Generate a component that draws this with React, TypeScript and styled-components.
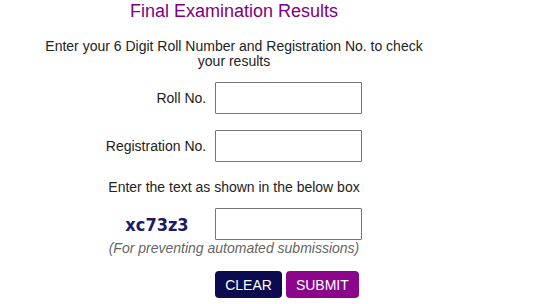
import React, { useState } from 'react';
import styled, { createGlobalStyle } from 'styled-components';

const GlobalStyle = createGlobalStyle`
  body {
    margin: 0;
    background: #fff;
    font-family: "Liberation Sans", Arial, sans-serif;
    color: #222;
  }
`;

const Page = styled.div`
  width: 468px;
  text-align: center;
`;

const Title = styled.h2`
  margin: 0;
  padding-top: 1px;
  font-size: 18px;
  font-weight: normal;
  line-height: 20px;
  color: #800080;
`;

const Intro = styled.p`
  margin: 18px 0 0;
  font-size: 14px;
  line-height: 15px;
`;

const Form = styled.form`
  display: grid;
  grid-template-columns: auto 147px;
  column-gap: 9px;
  row-gap: 16px;
  width: max-content;
  margin: 13px auto 0;
  align-items: center;
`;

const Label = styled.label`
  font-size: 14px;
  text-align: right;
`;

const Input = styled.input`
  width: 147px;
  height: 32px;
  box-sizing: border-box;
  border: 1px solid #767676;
  border-radius: 1px;
  padding: 0 6px;
  font-size: 14px;
  font-family: inherit;
`;

const Note = styled.div`
  grid-column: 1 / -1;
  font-size: 14px;
  line-height: 16px;
  text-align: center;
  margin: 1px 0 -3px;
`;

const Captcha = styled.div`
  text-align: center;
  font-family: "DejaVu Sans", sans-serif;
  font-stretch: condensed;
  font-weight: bold;
  font-size: 18px;
  color: #1a1a66;
  padding-left: 2px;
`;

const Hint = styled.div`
  grid-column: 1 / -1;
  font-size: 14px;
  font-style: italic;
  color: #666;
  line-height: 16px;
  margin-top: -16px;
`;

const Buttons = styled.div`
  grid-column: 2;
  display: flex;
  gap: 4px;
  margin-top: -1px;
`;

const Button = styled.button<{ $tone: 'dark' | 'purple' }>`
  height: 27px;
  padding: 0 10px;
  border: none;
  border-radius: 4px;
  color: #fff;
  font-family: "Liberation Sans", Arial, sans-serif;
  font-size: 14px;
  background: ${(p) => (p.$tone === 'dark' ? '#0d0b4f' : '#8b058b')};
  cursor: pointer;
`;

export default function App() {
  const [roll, setRoll] = useState('');
  const [reg, setReg] = useState('');
  const [code, setCode] = useState('');

  const clear = () => {
    setRoll('');
    setReg('');
    setCode('');
  };

  return (
    <Page>
      <GlobalStyle />
      <Title>Final Examination Results</Title>
      <Intro>
        Enter your 6 Digit Roll Number and Registration No. to check
        <br />
        your results
      </Intro>
      <Form onSubmit={(e) => e.preventDefault()}>
        <Label htmlFor="roll">Roll No.</Label>
        <Input id="roll" value={roll} onChange={(e) => setRoll(e.target.value)} />
        <Label htmlFor="reg">Registration No.</Label>
        <Input id="reg" value={reg} onChange={(e) => setReg(e.target.value)} />
        <Note>Enter the text as shown in the below box</Note>
        <Captcha>xc73z3</Captcha>
        <Input value={code} onChange={(e) => setCode(e.target.value)} />
        <Hint>(For preventing automated submissions)</Hint>
        <Buttons>
          <Button type="button" $tone="dark" onClick={clear}>
            CLEAR
          </Button>
          <Button type="submit" $tone="purple">
            SUBMIT
          </Button>
        </Buttons>
      </Form>
    </Page>
  );
}
